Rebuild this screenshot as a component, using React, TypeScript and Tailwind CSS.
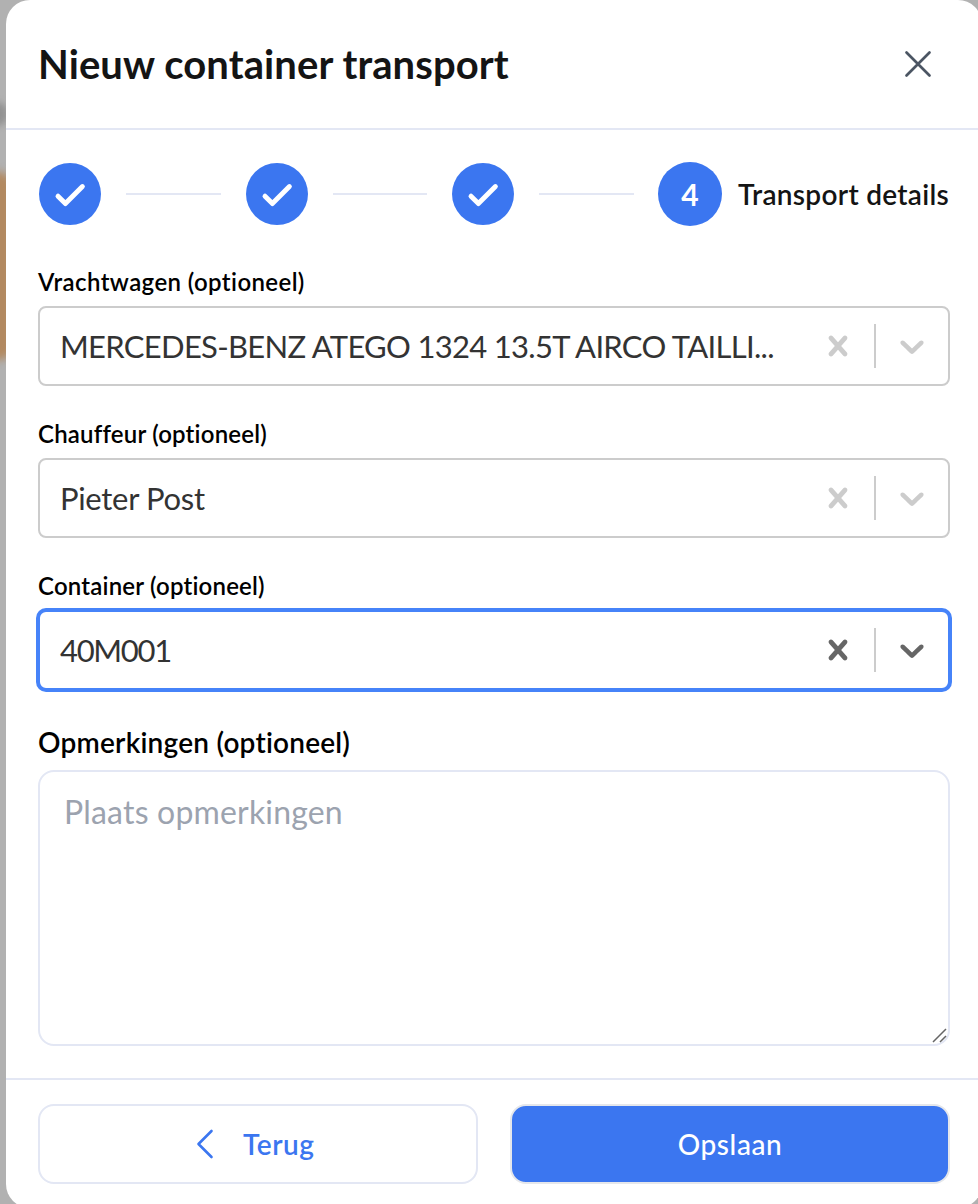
import React from "react";

function StepDone() {
  return (
    <div className="flex h-16 w-16 shrink-0 items-center justify-center">
      <div className="h-[62px] w-[62px] rounded-full bg-[#3b76f0]">
        <svg width="62" height="62" viewBox="0 0 62 62" fill="none" stroke="#fff" strokeWidth="4.9" strokeLinecap="round" strokeLinejoin="round">
          <path d="M19 33.2 26.4 40.6 43.4 23.5" />
        </svg>
      </div>
    </div>
  );
}

function StepLine() {
  return <div className="h-0.5 flex-1 bg-[#e3e7f4]" />;
}

interface SelectProps {
  label: string;
  labelClass: string;
  value: string;
  valueClass: string;
  focused?: boolean;
}

function Select({ label, labelClass, value, valueClass, focused = false }: SelectProps) {
  return (
    <div>
      <label className={"block h-8 text-[24px] font-semibold leading-8 whitespace-nowrap text-black " + labelClass}>{label}</label>
      <div
        className={
          "mt-2 flex h-20 items-center rounded-lg border-2 bg-white " +
          (focused ? "border-[#4683f9] ring-2 ring-[#4683f9]" : "border-[#cccccc]")
        }
      >
        <div className="min-w-0 flex-1 pl-5">
          <div className={"text-[31px] leading-10 whitespace-nowrap text-[#333333] " + valueClass}>{value}</div>
        </div>
        <div className={"flex items-center self-stretch " + (focused ? "text-[#666666]" : "text-[#cccccc]")}>
          <span className="p-4">
            <svg width="40" height="40" viewBox="0 0 20 20" fill="currentColor">
              <path d="M14.348 14.849c-0.469 0.469-1.229 0.469-1.697 0l-2.651-3.030-2.651 3.029c-0.469 0.469-1.229 0.469-1.697 0-0.469-0.469-0.469-1.229 0-1.697l2.758-3.15-2.759-3.152c-0.469-0.469-0.469-1.228 0-1.697s1.228-0.469 1.697 0l2.652 3.031 2.651-3.031c0.469-0.469 1.228-0.469 1.697 0s0.469 1.229 0 1.697l-2.758 3.152 2.758 3.15c0.469 0.469 0.469 1.229 0 1.698z" />
            </svg>
          </span>
          <span className="my-4 w-0.5 self-stretch bg-[#cccccc]" />
          <span className="p-4">
            <svg width="40" height="40" viewBox="0 0 20 20" fill="currentColor">
              <path d="M4.516 7.548c0.436-0.446 1.043-0.481 1.576 0l3.908 3.747 3.908-3.747c0.533-0.481 1.141-0.446 1.574 0 0.436 0.445 0.408 1.197 0 1.615-0.406 0.418-4.695 4.502-4.695 4.502-0.217 0.223-0.502 0.335-0.787 0.335s-0.57-0.112-0.789-0.335c0 0-4.287-4.084-4.695-4.502s-0.436-1.17 0-1.615z" />
            </svg>
          </span>
        </div>
      </div>
    </div>
  );
}

export default function App() {
  return (
    <div className="relative h-[1204px] w-[978px] overflow-hidden bg-[#b1b1b1] font-['Lato',sans-serif]">
      <div className="absolute -left-8 top-[172px] h-[188px] w-[46px] rounded-2xl bg-[#b28960] blur-[4px]" />
      <div className="absolute -left-5 top-[102px] h-6 w-7 rounded-full bg-[#929292] blur-[3px]" />
      <div className="relative ml-1.5 flex h-[1208px] w-[976px] flex-col rounded-3xl bg-white">
        <header className="flex h-[130px] items-center justify-between border-b-2 border-[#e3e7f4] pl-8 pr-12">
          <h1 className="text-[40px] font-bold leading-[56px] tracking-[0.1px] whitespace-nowrap text-[#141414]">Nieuw container transport</h1>
          <button type="button" aria-label="Sluiten" className="text-[#4b5563]">
            <svg width="32" height="32" viewBox="0 0 32 32" fill="none" stroke="currentColor" strokeWidth="2.7" strokeLinecap="round">
              <path d="M4.5 4.5 27.5 27.5M27.5 4.5 4.5 27.5" />
            </svg>
          </button>
        </header>

        <main className="flex flex-1 flex-col px-8 pt-8">
          <div className="flex h-16 items-center gap-6">
            <StepDone />
            <StepLine />
            <StepDone />
            <StepLine />
            <StepDone />
            <StepLine />
            <div className="flex w-[292px] items-center gap-4">
              <div className="flex h-16 w-16 shrink-0 items-center justify-center rounded-full bg-[#3b76f0] text-[30px] font-bold text-white">4</div>
              <span className="text-[28px] font-semibold tracking-[0.3px] whitespace-nowrap text-[#141414]">Transport details</span>
            </div>
          </div>

          <div className="mt-10 flex flex-col gap-8">
            <Select label="Vrachtwagen (optioneel)" labelClass="tracking-[0.4px]" value="MERCEDES-BENZ ATEGO 1324 13.5T AIRCO TAILLI..." valueClass="tracking-[-0.7px]" />
            <Select label="Chauffeur (optioneel)" labelClass="tracking-[0.2px]" value="Pieter Post" valueClass="tracking-[-0.3px]" />
            <Select label="Container (optioneel)" labelClass="tracking-[0.2px]" value="40M001" valueClass="tracking-[-1.3px]" focused />
            <div>
              <label className="block h-10 text-[28px] font-semibold leading-10 tracking-[0.22px] whitespace-nowrap text-black">Opmerkingen (optioneel)</label>
              <div className="relative mt-2 h-[276px] rounded-2xl border-2 border-[#e3e7f4] px-6 pt-5">
                <div className="text-[32px] leading-10 tracking-[0.18px] whitespace-nowrap text-[#9ca3af]">Plaats opmerkingen</div>
                <svg className="absolute right-0 bottom-0" width="18" height="18" viewBox="0 0 18 18" fill="none" stroke="#666" strokeWidth="1.5">
                  <path d="M3 16 16 3M10 16 16 10" />
                </svg>
              </div>
            </div>
          </div>
        </main>

        <footer className="flex h-[130px] gap-8 border-t-2 border-[#e3e7f4] px-8 pt-6">
          <button type="button" className="flex h-20 flex-1 items-center justify-center rounded-2xl border-2 border-[#e3e7f4] text-[#3b76f0]">
            <svg className="mr-[21px]" width="32" height="32" viewBox="0 0 32 32" fill="none" stroke="currentColor" strokeWidth="2.6" strokeLinecap="round" strokeLinejoin="round">
              <path d="M21.5 3 8.5 16 21.5 29" />
            </svg>
            <span className="w-[83px] text-left text-[28px] font-semibold tracking-[0.5px] whitespace-nowrap">Terug</span>
          </button>
          <button type="button" className="flex h-20 flex-1 items-center justify-center rounded-2xl border-2 border-[#e5e7eb] bg-[#3b76f0] text-[28px] font-medium tracking-[0.6px] whitespace-nowrap text-white">
            Opslaan
          </button>
        </footer>
      </div>
    </div>
  );
}
